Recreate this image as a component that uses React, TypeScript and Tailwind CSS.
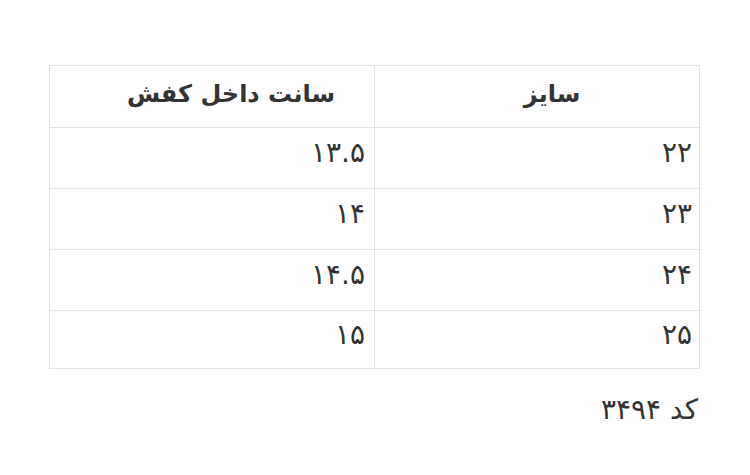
import React from "react";

const rows = [
  ["۲۲", "۱۳.۵"],
  ["۲۳", "۱۴"],
  ["۲۴", "۱۴.۵"],
  ["۲۵", "۱۵"],
];

export default function App() {
  return (
    <div dir="rtl" className="w-[750px] h-[475px] bg-white text-[#333] pt-[65px] pr-[50px] pl-[49px]" style={{ fontFamily: '"DejaVu Sans", sans-serif' }}>
      <table className="w-[651px] border-collapse border border-[#e3e3e3] table-fixed">
        <thead>
          <tr className="h-[62px]">
            <th className="w-[325px] border border-[#e3e3e3] text-center font-bold text-[24px] pb-[6px] pl-[30px]">سایز</th>
            <th className="border border-[#e3e3e3] text-center font-bold text-[24px] pb-[6px] pl-[38px]">سانت داخل کفش</th>
          </tr>
        </thead>
        <tbody>
          {rows.map((r, i) => (
            <tr key={i} className={i === 3 ? "h-[58px]" : "h-[61px]"}>
              <td className="border border-[#e3e3e3] text-right pr-[7px] pb-[10px] text-[28px]">{r[0]}</td>
              <td className="border border-[#e3e3e3] text-right pr-[9px] pb-[10px] text-[28px]">{r[1]}</td>
            </tr>
          ))}
        </tbody>
      </table>
      <div className="mt-[20px] text-[28px] pr-[2px]">کد ۳۴۹۴</div>
    </div>
  );
}
